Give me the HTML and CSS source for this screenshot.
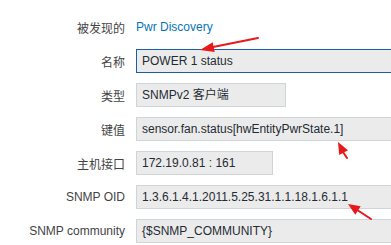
FILE: index.html
```html
<!DOCTYPE html>
<html lang="zh-CN">
<head>
  <meta charset="UTF-8">
  <title>监控项</title>
  <link rel="stylesheet" href="styles.css">
</head>
<body>

<div class="form">
  <div class="row">
    <label>被发现的</label>
    <a href="#" class="link">Pwr Discovery</a>
  </div>
  <div class="row">
    <label>名称</label>
    <div class="field wide focus">POWER 1 status</div>
  </div>
  <div class="row">
    <label>类型</label>
    <div class="field type">SNMPv2 客户端</div>
  </div>
  <div class="row">
    <label>键值</label>
    <div class="field wide">sensor.fan.status[hwEntityPwrState.1]</div>
  </div>
  <div class="row">
    <label>主机接口</label>
    <div class="field iface">172.19.0.81 : 161</div>
  </div>
  <div class="row">
    <label>SNMP OID</label>
    <div class="field wide">1.3.6.1.4.1.2011.5.25.31.1.1.18.1.6.1.1</div>
  </div>
  <div class="row">
    <label>SNMP community</label>
    <div class="field wide">{$SNMP_COMMUNITY}</div>
  </div>
</div>

<!-- red annotation arrows drawn over the form -->
<svg class="marks" width="391" height="245" viewBox="0 0 391 245">
  <g stroke="#e8191b" stroke-width="2" fill="#e8191b" stroke-linecap="round">
    <line x1="258" y1="38" x2="213" y2="47" />
    <polygon stroke="none" points="200,50 214.7,52.1 212.7,42.3" />
    <line x1="347" y1="158" x2="343" y2="152" />
    <polygon stroke="none" points="338,142 348,150.2 339.2,154.9" />
    <line x1="371" y1="219" x2="358" y2="210.5" />
    <polygon stroke="none" points="348,204 360.7,206.3 355.3,214.7" />
  </g>
</svg>

</body>
</html>
```

FILE: styles.css
```css
body {
  margin: 0;
  padding: 0;
  background: #fff;
  font-family: "Liberation Sans", "Noto Sans CJK SC", sans-serif;
  font-size: 12px;
  color: #1f2c33;
  overflow: hidden;
  width: 391px;
  height: 245px;
  position: relative;
}

.form {
  padding-top: 15px;
  display: flex;
  flex-direction: column;
  gap: 10px;
}

.row {
  display: flex;
  align-items: center;
  height: 24px;
  gap: 11px;
}

.row label {
  width: 125px;
  flex: none;
  text-align: right;
  color: #444;
}

.link {
  color: #0275b8;
  text-decoration: none;
}

.field {
  flex: none;
  box-sizing: border-box;
  height: 24px;
  line-height: 22px;
  padding: 0 5px;
  background: #ebebeb;
  border: 1px solid #cdd5d9;
  white-space: nowrap;
  overflow: hidden;
}

/* wide inputs run off the right edge of the shot */
.wide {
  flex: 1;
  min-width: 0;
  border-right: none;
}

.type {
  width: 150px;
}

.iface {
  width: 137px;
}

.focus {
  border-color: #1a5fa6;
}

.marks {
  position: absolute;
  left: 0;
  top: 0;
  pointer-events: none;
}
```
